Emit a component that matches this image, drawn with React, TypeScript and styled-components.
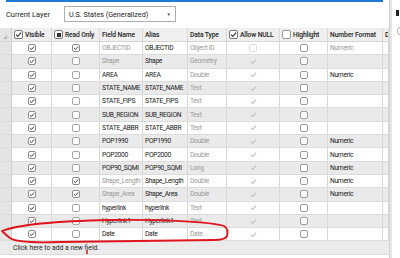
import styled, { createGlobalStyle } from "styled-components";

const GlobalStyle = createGlobalStyle`
  body {
    margin: 0;
    background: #ffffff;
    font-family: Roboto, "Noto Sans", sans-serif;
  }
`;

const COLS = "12px 40px 48px 43px 45px 39px 53px 48px 55px 6px";

interface FieldRow {
  field: string;
  alias: string;
  type: string;
  readOnly?: boolean;
  locked?: boolean;
  format?: string;
}

const rows: FieldRow[] = [
  { field: "OBJECTID", alias: "OBJECTID", type: "Object ID", readOnly: true, locked: true, format: "Numeric" },
  { field: "Shape", alias: "Shape", type: "Geometry", locked: true },
  { field: "AREA", alias: "AREA", type: "Double", format: "Numeric" },
  { field: "STATE_NAME", alias: "STATE_NAME", type: "Text" },
  { field: "STATE_FIPS", alias: "STATE_FIPS", type: "Text" },
  { field: "SUB_REGION", alias: "SUB_REGION", type: "Text" },
  { field: "STATE_ABBR", alias: "STATE_ABBR", type: "Text" },
  { field: "POP1990", alias: "POP1990", type: "Double", format: "Numeric" },
  { field: "POP2000", alias: "POP2000", type: "Double", format: "Numeric" },
  { field: "POP90_SQMI", alias: "POP90_SQMI", type: "Long", format: "Numeric" },
  { field: "Shape_Length", alias: "Shape_Length", type: "Double", readOnly: true, locked: true, format: "Numeric" },
  { field: "Shape_Area", alias: "Shape_Area", type: "Double", readOnly: true, locked: true, format: "Numeric" },
  { field: "hyperlink", alias: "hyperlink", type: "Text" },
  { field: "Hyperlink1", alias: "Hyperlink1", type: "Text" },
  { field: "Date", alias: "Date", type: "Date" },
];

const Page = styled.div`
  position: relative;
  width: 400px;
  height: 258px;
  overflow: hidden;
  display: flex;
  background: #ffffff;
`;

const Main = styled.div`
  width: 389px;
  display: flex;
  flex-direction: column;
  border-right: 1px solid #d2d2d2;
`;

const BlueLine = styled.div`
  height: 2px;
  margin: 0 6px 0 6px;
  background: #1f7ad4;
`;

const Toolbar = styled.div`
  height: 26px;
  display: flex;
  align-items: center;
  padding-left: 6px;
  gap: 9px;
  box-sizing: border-box;
  padding-bottom: 2px;
`;

const Label = styled.span`
  font-size: 7.4px;
  color: #222;
  width: 49px;
`;

const Select = styled.div`
  width: 112px;
  height: 16px;
  box-sizing: border-box;
  border: 1px solid #adadad;
  background: #fff;
  display: flex;
  align-items: center;
  justify-content: space-between;
  padding: 0 4px 0 4px;
  font-size: 7.2px;
  color: #222;
`;

const Caret = styled.span`
  font-size: 4.5px;
  color: #444;
`;

const Table = styled.div`
  display: flex;
  flex-direction: column;
`;

const Row = styled.div<{ $alt?: boolean; $head?: boolean }>`
  display: grid;
  grid-template-columns: ${COLS};
  height: ${(p) => (p.$head ? "14px" : "13.3px")};
  flex-shrink: 0;
  background: ${(p) => (p.$head ? "#efefef" : p.$alt ? "#eaeaea" : "#ffffff")};
  border-bottom: 1px solid ${(p) => (p.$head ? "#d6d6d6" : "#dcdcdc")};
  box-sizing: border-box;
`;

const Cell = styled.div<{ $center?: boolean; $muted?: boolean; $bold?: boolean }>`
  display: flex;
  align-items: center;
  justify-content: ${(p) => (p.$center ? "center" : "flex-start")};
  gap: 2px;
  padding-left: ${(p) => (p.$center ? "0" : "2px")};
  border-right: 1px solid #d8d8d8;
  font-size: 6.7px;
  font-weight: ${(p) => (p.$bold ? 500 : 400)};
  color: ${(p) => (p.$muted ? "#9a9a9a" : "#222")};
  white-space: nowrap;
  overflow: hidden;
  letter-spacing: ${(p) => (p.$bold ? "-0.1px" : "-0.3px")};
`;

const RowHead = styled.div`
  background: #e4e4e4;
  border-right: 1px solid #d0d0d0;
  position: relative;
`;

const Corner = styled.div`
  position: absolute;
  left: 3px;
  bottom: 2px;
  width: 0;
  height: 0;
  border-left: 4px solid transparent;
  border-bottom: 4px solid #b5b5b5;
`;

const Box = styled.span<{ $size?: number; $tone?: string }>`
  width: ${(p) => p.$size ?? 8}px;
  height: ${(p) => p.$size ?? 8}px;
  box-sizing: border-box;
  border: 1px solid ${(p) => p.$tone ?? "#8a8a8a"};
  border-radius: 2px;
  background: #fff;
  display: inline-flex;
  align-items: center;
  justify-content: center;
  flex-shrink: 0;
`;

const Square = styled.span`
  width: 4px;
  height: 4px;
  background: #333;
`;

function Tick({ color = "#333", size = 6 }: { color?: string; size?: number }) {
  return (
    <svg width={size} height={size} viewBox="0 0 10 10">
      <path d="M1.5 5.2 L4 7.6 L8.6 2.4" fill="none" stroke={color} strokeWidth="1.6" />
    </svg>
  );
}

function Check({ on, size = 8, tone }: { on?: boolean; size?: number; tone?: string }) {
  return (
    <Box $size={size} $tone={tone}>
      {on && <Tick size={size - 2} />}
    </Box>
  );
}

const AddRow = styled.div`
  height: 13px;
  flex-shrink: 0;
  background: #ebebeb;
  border-bottom: 1px solid #dcdcdc;
  display: flex;
  align-items: center;
  padding-left: 13px;
  font-size: 6.8px;
  color: #222;
`;

const Side = styled.div`
  flex: 1;
  border-left: 2px solid #e6e6e6;
  position: relative;
`;

const SideMark = styled.div`
  position: absolute;
  left: 4px;
  top: 10px;
  width: 3px;
  height: 6px;
  background: #222;
`;

const SideRadio = styled.div`
  position: absolute;
  left: 5px;
  top: 26px;
  width: 8px;
  height: 8px;
  border-radius: 50%;
  border: 1px solid #aaa;
`;

const Scribble = styled.svg`
  position: absolute;
  left: 0;
  top: 0;
  pointer-events: none;
`;

export default function App() {
  return (
    <>
      <GlobalStyle />
      <Page>
        <Main>
          <BlueLine />
          <Toolbar>
            <Label>Current Layer</Label>
            <Select>
              <span>U.S. States (Generalized)</span>
              <Caret>▼</Caret>
            </Select>
          </Toolbar>
          <Table>
            <Row $head>
              <RowHead>
                <Corner />
              </RowHead>
              <Cell $bold>
                <Check on size={9} tone="#777" />
                Visible
              </Cell>
              <Cell $bold>
                <Box $size={9} $tone="#777">
                  <Square />
                </Box>
                Read Only
              </Cell>
              <Cell $bold>Field Name</Cell>
              <Cell $bold>Alias</Cell>
              <Cell $bold>Data Type</Cell>
              <Cell $bold>
                <Check on size={9} tone="#777" />
                Allow NULL
              </Cell>
              <Cell $bold>
                <Check size={9} tone="#999" />
                Highlight
              </Cell>
              <Cell $bold>Number Format</Cell>
              <Cell $bold>D</Cell>
            </Row>
            {rows.map((r, i) => (
              <Row key={r.field} $alt={i % 2 === 1}>
                <RowHead />
                <Cell $center>
                  <Check on tone="#8c8c8c" />
                </Cell>
                <Cell $center>
                  <Check on={r.readOnly} tone={r.readOnly ? "#8c8c8c" : "#a5a5a5"} />
                </Cell>
                <Cell $muted={r.locked}>{r.field}</Cell>
                <Cell>{r.alias}</Cell>
                <Cell $muted>{r.type}</Cell>
                <Cell $center>
                  {i === 0 ? <Check tone="#dedede" /> : <Tick color="#c2c2c2" size={7} />}
                </Cell>
                <Cell $center>
                  <Check tone="#9a9a9a" />
                </Cell>
                <Cell $muted={i === 0}>{r.format ?? ""}</Cell>
                <Cell />
              </Row>
            ))}
            <AddRow>Click here to add a new field.</AddRow>
          </Table>
        </Main>
        <Side>
          <SideMark />
          <SideRadio />
        </Side>
        <Scribble width="400" height="258" viewBox="0 0 400 258">
          <path
            d="M2 231 C 20 224, 60 221, 110 220 C 160 219, 212 222, 224 226 Q 229 229, 227 236 Q 225 240, 214 240 L 60 242 C 30 243, 14 241, 10 238 C 6 235, 3 232, 2 231 Z"
            fill="none"
            stroke="#e0141c"
            strokeWidth="1.8"
            strokeLinejoin="round"
          />
          <path d="M87 250 L87 254" stroke="#e0141c" strokeWidth="1.5" />
        </Scribble>
      </Page>
    </>
  );
}
